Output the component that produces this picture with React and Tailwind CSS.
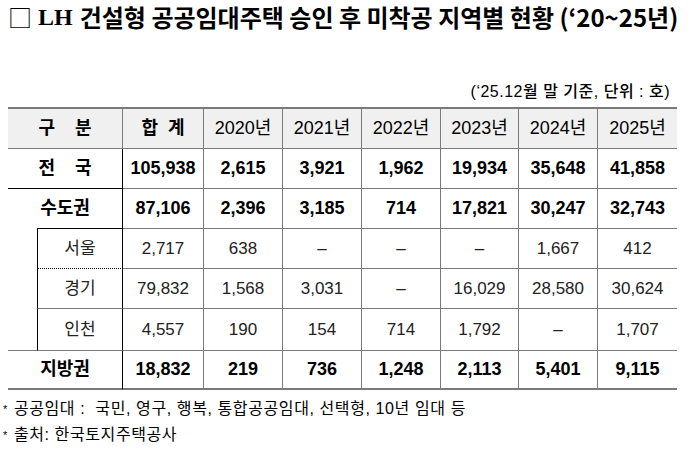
const rows = [
  { label: "전    국", values: ["105,938", "2,615", "3,921", "1,962", "19,934", "35,648", "41,858"], kind: "main" },
  { label: "수도권", values: ["87,106", "2,396", "3,185", "714", "17,821", "30,247", "32,743"], kind: "main" },
  { label: "서울", values: ["2,717", "638", "-", "-", "-", "1,667", "412"], kind: "sub", line: "dotted" },
  { label: "경기", values: ["79,832", "1,568", "3,031", "-", "16,029", "28,580", "30,624"], kind: "sub", line: "gray" },
  { label: "인천", values: ["4,557", "190", "154", "714", "1,792", "-", "1,707"], kind: "sub", line: "gray" },
  { label: "지방권", values: ["18,832", "219", "736", "1,248", "2,113", "5,401", "9,115"], kind: "main" },
];

const years = ["2020년", "2021년", "2022년", "2023년", "2024년", "2025년"];

const font = "font-['Liberation_Sans','Noto_Sans_CJK_KR',sans-serif]";

const App = () => {
  return (
    <div className={`w-[689px] h-[451px] bg-white text-black ${font}`}>
      <h1 className="h-[34px] pl-[8px] flex items-center text-[24px] font-bold font-['Noto_Sans_CJK_KR',sans-serif] whitespace-nowrap">
        <span className="font-normal">□</span>
        <span className="ml-[6px] font-['Liberation_Serif',serif] font-bold">LH</span>
        <span className="ml-[7px]">건설형 공공임대주택 승인 후 미착공 지역별 현황 (‘20~25년)</span>
      </h1>

      <div className="mt-[46px] h-[24px] pr-[19px] flex items-center justify-end text-[16px] font-medium tracking-[0.5px]">
        (‘25.12월 말 기준, 단위 : 호)
      </div>

      <table className="mt-[3px] ml-[8px] w-[669px] table-fixed border-separate border-spacing-0 border-t-2 border-[#7a7a7a]">
        <colgroup>
          <col className="w-[29px]" />
          <col className="w-[86px]" />
          <col className="w-[81px]" />
          <col className="w-[79px]" />
          <col className="w-[79px]" />
          <col className="w-[79px]" />
          <col className="w-[78px]" />
          <col className="w-[79px]" />
          <col className="w-[79px]" />
        </colgroup>
        <thead>
          <tr className="h-[40px] bg-[#f0f0f0] text-[18px]">
            <th colSpan={2} className="font-bold border-b border-r border-[#7a7a7a] whitespace-pre">구    분</th>
            <th className="font-bold border-b border-r border-[#7a7a7a] whitespace-pre">합  계</th>
            {years.map((y, i) => (
              <th
                key={y}
                className={`font-normal border-b border-[#7a7a7a] ${i < years.length - 1 ? "border-r" : ""}`}
              >
                {y}
              </th>
            ))}
          </tr>
        </thead>
        <tbody>
          {rows.map((row, r) => {
            const isMain = row.kind === "main";
            const isLast = r === rows.length - 1;
            const rowBottom = isLast ? "border-b-2 border-b-[#7a7a7a]" : "border-b border-b-[#7a7a7a]";
            let labelCell;
            if (r === 1) {
              // 수도권: its bottom line only runs under the indented sub-rows
              labelCell = (
                <td colSpan={2} className="p-0 border-r border-r-black">
                  <div className="h-[40px] flex flex-col">
                    <div className="flex-1 flex items-center justify-center font-bold text-[18px]">{row.label}</div>
                    <div className="ml-[29px] border-b border-b-black" />
                  </div>
                </td>
              );
            } else if (isMain) {
              const labelBottom = isLast ? "border-b-2 border-b-[#7a7a7a]" : "border-b border-b-black";
              labelCell = (
                <td colSpan={2} className={`text-center font-bold text-[18px] whitespace-pre border-r border-r-black ${labelBottom}`}>
                  {row.label}
                </td>
              );
            } else {
              const labelBottom =
                row.line === "dotted"
                  ? "border-b [border-bottom-style:dotted] border-b-black"
                  : "border-b border-b-[#7a7a7a]";
              labelCell = (
                <>
                  {r === 2 && <td rowSpan={3} className="border-b border-b-[#7a7a7a]" />}
                  <td className={`text-center text-[17px] text-[#222] border-l border-l-black border-r border-r-black ${labelBottom}`}>
                    {row.label}
                  </td>
                </>
              );
            }
            return (
              <tr key={row.label} className={r === 5 ? "h-[39px]" : r === 4 ? "h-[42px]" : "h-[40px]"}>
                {labelCell}
                {row.values.map((v, i) => (
                  <td
                    key={i}
                    className={`text-center ${rowBottom} ${i < row.values.length - 1 ? "border-r border-r-[#7a7a7a]" : ""} ${
                      isMain ? "text-[18px] font-bold" : "text-[17px] text-[#222]"
                    }`}
                  >
                    {v === "-" ? "–" : v}
                  </td>
                ))}
              </tr>
            );
          })}
        </tbody>
      </table>

      <div className="mt-[7px] pl-[3px] text-[16px] tracking-[0.6px]">
        <div className="h-[24px] flex items-center whitespace-pre">
          <span className="text-[11px] mr-[6px]">*</span>공공임대 :  국민, 영구, 행복, 통합공공임대, 선택형, 10년 임대 등
        </div>
        <div className="mt-[2px] h-[24px] flex items-center">
          <span className="text-[11px] mr-[6px]">*</span>출처: 한국토지주택공사
        </div>
      </div>
    </div>
  );
};

export default App;
